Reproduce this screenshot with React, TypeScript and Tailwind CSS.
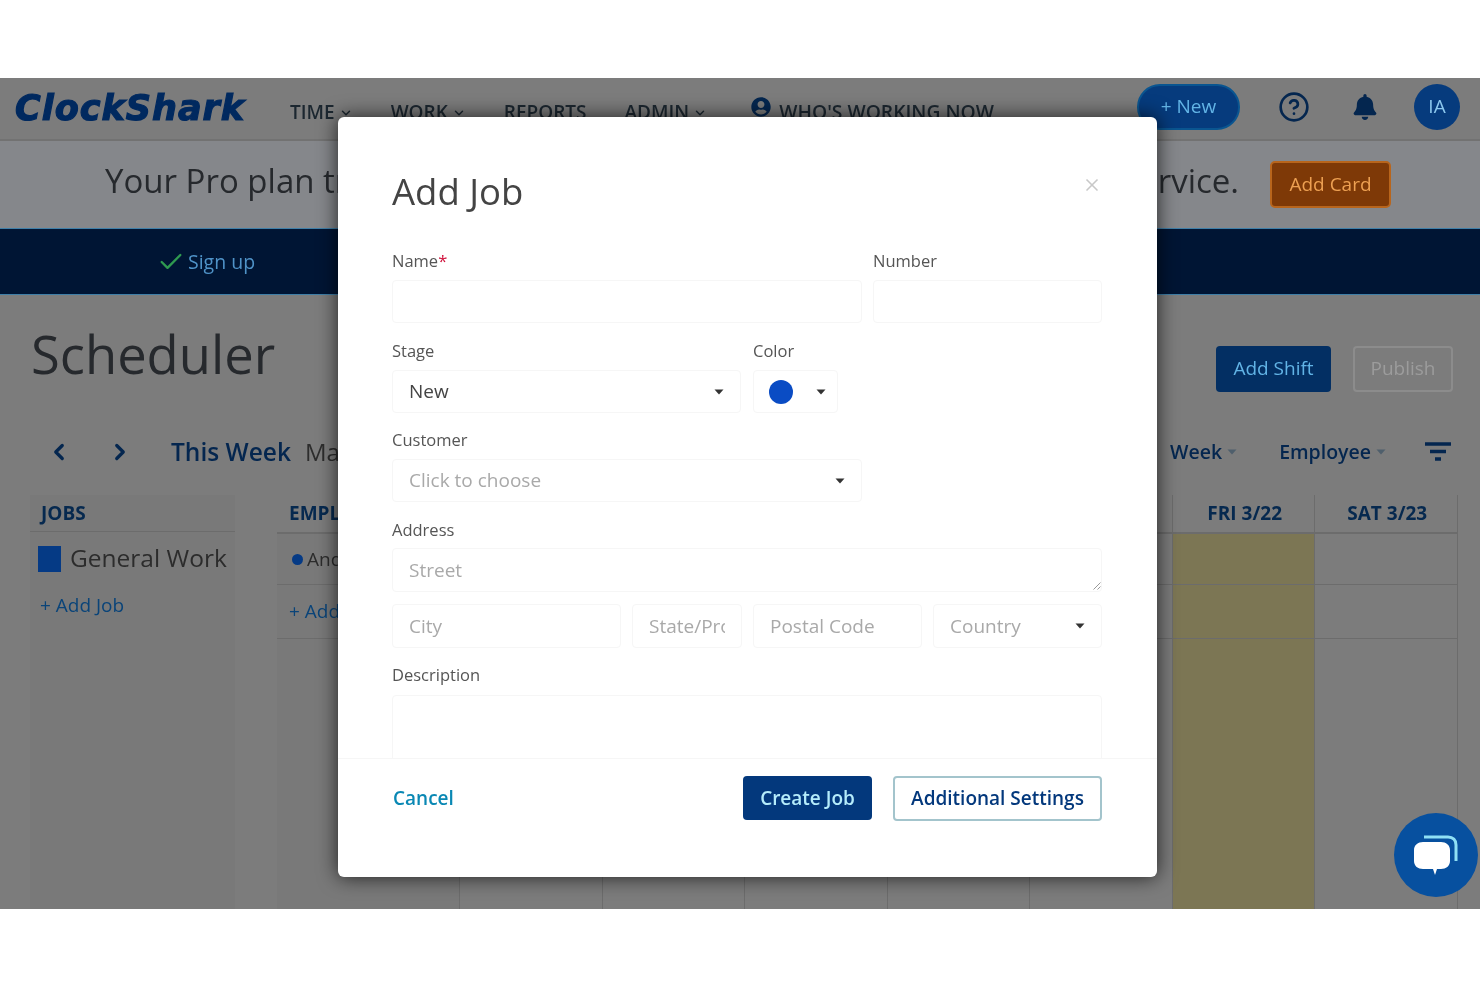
import React from 'react';
import { Check, ChevronDown, ChevronLeft, ChevronRight, CircleHelp, X } from 'lucide-react';
import { FaBell, FaUserCircle } from 'react-icons/fa';

const font = "font-['Open_Sans',sans-serif]";

const Caret = ({ className = 'text-[#333]' }: { className?: string }) => (
    <svg width="10" height="6" viewBox="0 0 10 6" className={className}>
        <path d="M0.5 0.5h9L5 5.5z" fill="currentColor" />
    </svg>
);

const Label = ({ children, className = '' }: { children: React.ReactNode; className?: string }) => (
    <div className={`h-[22px] text-[16.5px] leading-[22px] text-[#555] ${className}`}>{children}</div>
);

const Field = ({ children, className = '', filled = false }: { children?: React.ReactNode; className?: string; filled?: boolean }) => (
    <div className={`flex items-center rounded-[4px] border border-[#f6f6f6] px-4 text-[19px] whitespace-nowrap overflow-hidden ${filled ? 'text-[#444]' : 'text-[#a9a9a9]'} ${className}`}>
        {children}
    </div>
);

const NavItem = ({ label, arrow = true }: { label: string; arrow?: boolean }) => (
    <div className="flex items-center gap-1 text-[19px] font-semibold text-[#1c2730]">
        {label}
        {arrow && <ChevronDown size={14} strokeWidth={2.5} />}
    </div>
);

const days = ['SUN 3/17', 'MON 3/18', 'TUE 3/19', 'WED 3/20', 'THU 3/21', 'FRI 3/22', 'SAT 3/23'];

const Background = () => (
    <div className="flex h-full flex-col">
        {/* Top nav */}
        <div className="flex h-[63px] shrink-0 items-center border-b-2 border-[#727272] pl-[15px] pr-[20px]">
            <div className="w-[275px] font-['DejaVu_Sans',sans-serif] text-[35px] font-bold italic tracking-[1px] text-[#00295f] [-webkit-text-stroke:1.2px_#00295f]">
                ClockShark
            </div>
            <div className="flex items-center gap-[38px] pt-[8px]">
                <NavItem label="TIME" />
                <NavItem label="WORK" />
                <NavItem label="REPORTS" arrow={false} />
                <NavItem label="ADMIN" />
                <div className="ml-[6px] flex items-center gap-2 text-[19.3px] font-semibold text-[#1c2730]">
                    <FaUserCircle size={20} className="-mt-3 text-[#04264f]" />
                    WHO'S WORKING NOW
                </div>
            </div>
            <div className="-mt-[4px] ml-auto flex items-center">
                <div className="flex h-[46px] w-[103px] items-center justify-center rounded-full border-2 border-[#0a5590] bg-[#063b7d] text-[19px] text-[#62b4e6]">
                    + New
                </div>
                <CircleHelp size={32} strokeWidth={2} className="ml-[38px] text-[#04264f]" />
                <FaBell size={26} className="ml-[42px] text-[#04264f]" />
                <div className="ml-[36px] flex h-[46px] w-[46px] items-center justify-center rounded-full bg-[#063b7d] text-[19px] text-[#8cc8ee]">
                    IA
                </div>
            </div>
        </div>

        {/* Trial banner */}
        <div className="flex h-[87px] shrink-0 items-center bg-[#85878b] pl-[105px] pr-[89px]">
            <div className="-mt-[8px] flex flex-1 justify-between text-[33px] text-[#26292d]">
                <span>Your Pro plan trial ends</span>
                <span>to continue service.</span>
            </div>
            <div className="ml-[31px] flex h-[47px] w-[121px] items-center justify-center rounded-[5px] border-2 border-[#b8651c] bg-[#7e3907] text-[19px] text-[#eda052]">
                Add Card
            </div>
        </div>

        {/* Onboarding steps */}
        <div className="flex h-[67px] shrink-0 items-center border-y border-[#3f7fa8] bg-[#001534] pl-[157px] text-[19.5px] text-[#4f93c8]">
            <Check size={28} strokeWidth={2} className="mr-[3px] text-[#2f9a50]" />
            Sign up
        </div>

        {/* Page heading */}
        <div className="flex h-[97px] shrink-0 items-center justify-between pl-[31px] pr-[27px]">
            <div className="pt-[22px] text-[52.5px] text-[#26292d]">Scheduler</div>
            <div className="flex items-center gap-[22px] pt-[50px]">
                <div className="flex h-[46px] w-[115px] items-center justify-center rounded-[4px] bg-[#032f63] text-[19px] text-[#62b4e6]">
                    Add Shift
                </div>
                <div className="flex h-[46px] w-[100px] items-center justify-center rounded-[4px] border-2 border-[#8c8c8c] text-[19px] text-[#9c9c9c]">
                    Publish
                </div>
            </div>
        </div>

        {/* Toolbar */}
        <div className="mt-[40px] flex h-[40px] shrink-0 items-center pl-[46px] pr-[28px]">
            <ChevronLeft size={26} strokeWidth={3} className="text-[#04264f]" />
            <ChevronRight size={26} strokeWidth={3} className="ml-[35px] text-[#04264f]" />
            <div className="ml-[38px] text-[24.5px] font-semibold text-[#04264f]">This Week</div>
            <div className="ml-[14px] text-[24px] text-[#2d2d2d]">Mar 17 - 23</div>
            <div className="ml-auto flex items-center gap-[5px] text-[19.5px] font-semibold text-[#04264f]">
                Week <Caret className="text-[#4f5f6c]" />
            </div>
            <div className="ml-[42px] flex items-center gap-[5px] text-[19.5px] font-semibold text-[#04264f]">
                Employee <Caret className="text-[#4f5f6c]" />
            </div>
            <svg width="28" height="22" viewBox="0 0 28 22" className="ml-[38px] text-[#04264f]">
                <path d="M1 3h26M6 10.500h16M11 18h6" stroke="currentColor" strokeWidth="3.5" />
            </svg>
        </div>

        {/* Schedule grid */}
        <div className="mt-[23px] flex min-h-0 flex-1 pl-[30px] pr-[22px]">
            <div className="w-[205px] shrink-0 bg-[#797979]">
                <div className="flex h-[37px] items-center border-b border-[#6c6c6c] pl-[11px] text-[19px] font-bold text-[#06294f]">JOBS</div>
                <div className="mt-[8px] flex items-center pl-[8px] text-[24.5px] text-[#2c2c2c]">
                    <div className="mr-[9px] mt-[2px] h-[26px] w-[23px] bg-[#053a85]" />
                    General Work
                </div>
                <div className="mt-[14px] pl-[10px] text-[19px] text-[#0a4479]">+ Add Job</div>
            </div>
            <div className="ml-[42px] flex min-w-0 flex-1 flex-col">
                <div className="flex h-[37px] shrink-0">
                    <div className="flex w-[183px] shrink-0 items-center border-r border-[#6c6c6c] pl-[12px] text-[19px] font-bold text-[#06294f]">EMPLOYEES</div>
                    {days.map((day) => (
                        <div key={day} className="flex flex-1 items-center justify-center border-r border-[#6c6c6c] pl-[2px] text-[19px] font-bold text-[#06294f]">
                            {day}
                        </div>
                    ))}
                </div>
                <div className="flex min-h-0 flex-1 border-t-2 border-[#6c6c6c]">
                    <div className="flex w-[183px] shrink-0 flex-col border-r border-[#6c6c6c] bg-[#797979]">
                        <div className="flex h-[51px] items-center border-b border-[#6c6c6c] pl-[15px] text-[19px] text-[#2c2c2c]">
                            <span className="mr-[4px] h-[11px] w-[11px] rounded-full bg-[#053a85]" />
                            Andrew
                        </div>
                        <div className="flex h-[54px] items-center border-b border-[#6c6c6c] pl-[12px] text-[19px] text-[#0a4479]">+ Add</div>
                    </div>
                    {days.map((day) => (
                        <div key={day} className={`flex flex-1 flex-col border-r border-[#6c6c6c] ${day === 'FRI 3/22' ? 'bg-[#7c7654]' : ''}`}>
                            <div className="h-[51px] border-b border-[#6c6c6c]" />
                            <div className="h-[54px] border-b border-[#6c6c6c]" />
                        </div>
                    ))}
                </div>
            </div>
        </div>
    </div>
);

const AddJobModal = () => (
    <div className="absolute left-[338px] top-[39px] flex h-[760px] w-[819px] flex-col rounded-[6px] bg-white shadow-[0_0_20px_rgba(0,0,0,0.75)]">
        <div className="relative min-h-0 flex-1 overflow-hidden px-[54px]">
            <div className="flex h-[133px] items-start pt-[49px] text-[36.5px] leading-[50px] text-[#444]">Add Job</div>
            <X size={20} strokeWidth={2} className="absolute right-[55px] top-[58px] text-[#c8c8c8]" />

            <div className="flex gap-[11px]">
                <div className="w-[470px]">
                    <Label>Name<span className="text-[#d0103a]">*</span></Label>
                    <Field className="mt-[8px] h-[43px]" />
                </div>
                <div className="w-[229px]">
                    <Label>Number</Label>
                    <Field className="mt-[8px] h-[43px]" />
                </div>
            </div>

            <div className="mt-[17px] flex gap-[12px]">
                <div className="w-[349px]">
                    <Label>Stage</Label>
                    <Field filled className="mt-[8px] h-[43px] justify-between">
                        New
                        <Caret />
                    </Field>
                </div>
                <div className="w-[85px]">
                    <Label>Color</Label>
                    <Field className="mt-[8px] h-[43px] justify-between pl-[15px] pr-[11px]">
                        <span className="h-[24px] w-[24px] shrink-0 rounded-full bg-[#0a4cc4]" />
                        <Caret />
                    </Field>
                </div>
            </div>

            <div className="mt-[16px] w-[470px]">
                <Label>Customer</Label>
                <Field className="mt-[8px] h-[43px] justify-between">
                    Click to choose
                    <Caret />
                </Field>
            </div>

            <div className="mt-[17px]">
                <Label>Address</Label>
                <div className="relative mt-[7px]">
                    <Field className="h-[44px] w-[710px]">Street</Field>
                    <svg width="8" height="8" viewBox="0 0 8 8" className="absolute bottom-[2px] right-[2px] text-[#999]">
                        <path d="M7.500 0.500L0.500 7.500M7.500 4.500L4.500 7.500" stroke="currentColor" strokeWidth="1" />
                    </svg>
                </div>
                <div className="mt-[12px] flex h-[44px] gap-[11px]">
                    <Field className="w-[229px]">City</Field>
                    <Field className="w-[110px]">
                        <span className="block overflow-hidden">State/Province</span>
                    </Field>
                    <Field className="w-[169px]">Postal Code</Field>
                    <Field className="w-[169px] justify-between">
                        Country
                        <Caret />
                    </Field>
                </div>
            </div>

            <div className="mt-[16px]">
                <Label>Description</Label>
                <Field className="mt-[9px] h-[120px] w-[710px]" />
            </div>
        </div>

        <div className="flex h-[119px] shrink-0 items-start justify-between border-t border-[#f6f6f6] px-[55px] pt-[17px]">
            <div className="flex h-[44px] items-center text-[19px] font-semibold text-[#0a88b4]">Cancel</div>
            <div className="flex gap-[21px]">
                <div className="flex h-[44px] w-[129px] items-center justify-center rounded-[4px] bg-[#03387c] text-[19px] font-semibold text-[#b5ecfb]">
                    Create Job
                </div>
                <div className="flex h-[45px] w-[209px] items-center justify-center rounded-[4px] border-2 border-[#a3c4cc] text-[19px] font-semibold text-[#03387c]">
                    Additional Settings
                </div>
            </div>
        </div>
    </div>
);

const App: React.FC = () => {
    return (
        <div className={`flex h-[987px] w-[1480px] flex-col bg-white pt-[78px] ${font}`}>
            <div className="relative h-[831px] shrink-0 overflow-hidden bg-[#7c7c7c] blur-[0.6px]">
                <Background />
                <AddJobModal />

                {/* Chat launcher */}
                <div className="absolute bottom-[12px] right-[2px] flex h-[84px] w-[84px] items-center justify-center rounded-full bg-[#07509f]">
                    <svg width="44" height="44" viewBox="0 0 44 44">
                        <path d="M10 4h24c5 0 8 3 8 8v16" fill="none" stroke="#8fe0f5" strokeWidth="3" />
                        <path d="M9 9h18c5 0 9 3 9 8v11c0 5-4 8-9 8h-4l-2 6-2-6h-10c-5 0-9-3-9-8V17c0-5 4-8 9-8z" fill="#fff" />
                    </svg>
                </div>
            </div>
        </div>
    );
};

export default App;
